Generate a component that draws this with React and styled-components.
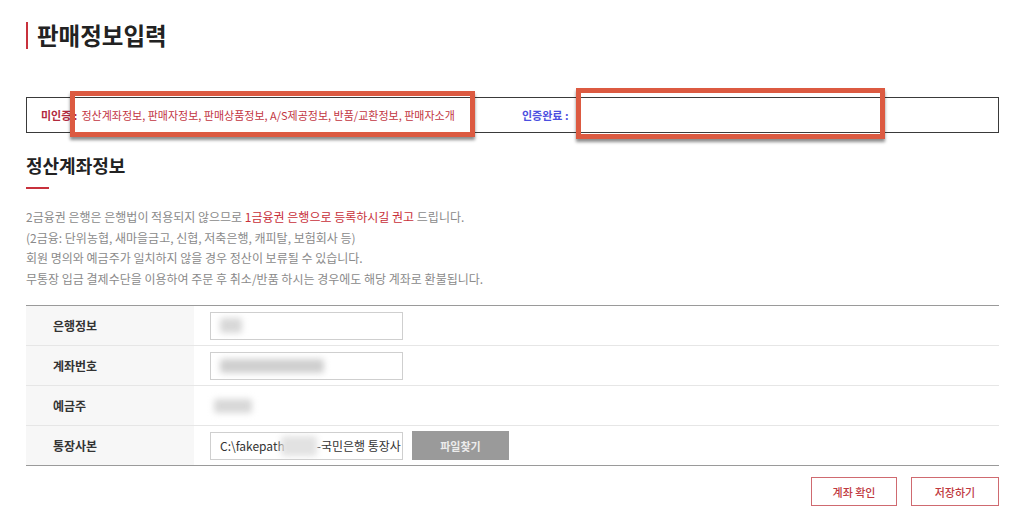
import React from 'react'
import styled, { createGlobalStyle } from 'styled-components';

const GlobalStyle = createGlobalStyle`
  html, body {
    margin: 0;
    padding: 0;
    background: #fff;
  }
  body {
    font-family: "Noto Sans CJK KR", "Noto Sans", sans-serif;
    color: #333;
  }
`;

const Page = styled.div`
  width: 973px;
  padding: 22px 0 0 26px;
`;

const Header = styled.div`
  display: flex;
  align-items: center;
  gap: 9px;
  height: 27px;
`;

const HeaderBar = styled.span`
  width: 2px;
  height: 27px;
  background: #c8313c;
`;

const Title = styled.h1`
  margin: 0;
  font-size: 23.5px;
  line-height: 27px;
  font-weight: 700;
  color: #222;
`;

const StatusBox = styled.div`
  position: relative;
  margin-top: 48px;
  height: 36px;
  box-sizing: border-box;
  border: 1px solid #3a3a3a;
  display: grid;
  grid-template-columns: 481px 1fr;
  align-items: center;
  padding-left: 14px;
  font-size: 11px;
  white-space: nowrap;
`;

const StatusLabel = styled.span`
  font-weight: 700;
  color: ${p => (p.$done ? '#4b4fe0' : '#b22a3d')};
  margin-right: 4px;
`;

const StatusItems = styled.span`
  color: #c2353f;
`;

const Highlight = styled.div`
  position: absolute;
  box-sizing: border-box;
  border: 5px solid #dc5a41;
  box-shadow: 0 3px 3px rgba(0, 0, 0, 0.45);
  left: ${p => p.$left}px;
  top: ${p => p.$top}px;
  width: ${p => p.$width}px;
  height: ${p => p.$height}px;
`;

const SectionTitle = styled.h2`
  margin: 20px 0 0;
  font-size: 18px;
  line-height: 24px;
  font-weight: 700;
  color: #222;
`;

const SectionLine = styled.div`
  margin-top: 10px;
  width: 23px;
  height: 2px;
  background: #c8313c;
`;

const Notes = styled.div`
  margin-top: 18px;
  font-size: 12px;
  line-height: 20.5px;
  color: #8a8a8a;
`;

const Note = styled.p`
  margin: 0;
`;

const Emph = styled.span`
  color: #c8303a;
`;

const Table = styled.div`
  margin-top: 16px;
  border-top: 1px solid #9a9a9a;
  border-bottom: 1px solid #9a9a9a;
`;

const Row = styled.div`
  display: flex;
  height: 39px;
  & + & {
    border-top: 1px solid #e6e6e6;
  }
`;

const LabelCell = styled.div`
  width: 141px;
  padding-left: 27px;
  background: #f7f7f7;
  display: flex;
  align-items: center;
  font-size: 12px;
  font-weight: 700;
  color: #333;
`;

const ValueCell = styled.div`
  flex: 1;
  display: flex;
  align-items: center;
  padding-left: ${p => (p.$plain ? 20 : 16)}px;
  gap: 9px;
`;

const InputBox = styled.div`
  width: 193px;
  height: 28px;
  box-sizing: border-box;
  border: 1px solid #cfcfcf;
  display: flex;
  align-items: center;
  padding-left: 9px;
  font-size: 12px;
  color: #333;
  white-space: nowrap;
  overflow: hidden;
`;

const Blur = styled.span`
  display: inline-block;
  width: ${p => p.$w}px;
  height: ${p => p.$h || 14}px;
  margin-left: ${p => p.$shift || 0}px;
  background: ${p => p.$bg || '#cfcfcf'};
  filter: blur(3px);
  border-radius: 3px;
  flex-shrink: 0;
`;

const FileButton = styled.button`
  width: 97px;
  height: 29px;
  border: none;
  background: #9a9a9a;
  color: #ececec;
  font-family: inherit;
  font-size: 11px;
  font-weight: 700;
`;

const Actions = styled.div`
  display: flex;
  justify-content: flex-end;
  gap: 14px;
  margin-top: 11px;
`;

const ActionButton = styled.button`
  width: ${p => p.$w}px;
  height: 29px;
  box-sizing: border-box;
  border: 1px solid #cf6a70;
  background: #fff;
  color: #c0393f;
  font-family: inherit;
  font-size: 11px;
  font-weight: 500;
`;

export default function App() {
  return (
    <>
      <GlobalStyle />
      <Page>
        <Header>
          <HeaderBar />
          <Title>판매정보입력</Title>
        </Header>

        <StatusBox>
          <div>
            <StatusLabel>미인증 :</StatusLabel>
            <StatusItems>정산계좌정보, 판매자정보, 판매상품정보, A/S제공정보, 반품/교환정보, 판매자소개</StatusItems>
          </div>
          <div>
            <StatusLabel $done>인증완료 :</StatusLabel>
          </div>
          <Highlight $left={43} $top={-7} $width={405} $height={46} />
          <Highlight $left={549} $top={-10} $width={309} $height={51} />
        </StatusBox>

        <SectionTitle>정산계좌정보</SectionTitle>
        <SectionLine />

        <Notes>
          <Note>2금융권 은행은 은행법이 적용되지 않으므로 <Emph>1금융권 은행으로 등록하시길 권고</Emph> 드립니다.</Note>
          <Note>(2금융: 단위농협, 새마을금고, 신협, 저축은행, 캐피탈, 보험회사 등)</Note>
          <Note>회원 명의와 예금주가 일치하지 않을 경우 정산이 보류될 수 있습니다.</Note>
          <Note>무통장 입금 결제수단을 이용하여 주문 후 취소/반품 하시는 경우에도 해당 계좌로 환불됩니다.</Note>
        </Notes>

        <Table>
          <Row>
            <LabelCell>은행정보</LabelCell>
            <ValueCell>
              <InputBox><Blur $w={22} $h={15} $bg="#d8d8d8" /></InputBox>
            </ValueCell>
          </Row>
          <Row>
            <LabelCell>계좌번호</LabelCell>
            <ValueCell>
              <InputBox><Blur $w={104} $h={14} /></InputBox>
            </ValueCell>
          </Row>
          <Row>
            <LabelCell>예금주</LabelCell>
            <ValueCell $plain>
              <Blur $w={38} $h={14} $bg="#d8d8d8" />
            </ValueCell>
          </Row>
          <Row>
            <LabelCell>통장사본</LabelCell>
            <ValueCell>
              <InputBox>
                C:\fakepath<Blur $w={36} $h={20} $shift={-4} $bg="#e2e2e2" />-국민은행 통장사
              </InputBox>
              <FileButton>파일찾기</FileButton>
            </ValueCell>
          </Row>
        </Table>

        <Actions>
          <ActionButton $w={86}>계좌 확인</ActionButton>
          <ActionButton $w={88}>저장하기</ActionButton>
        </Actions>
      </Page>
    </>
  );
}
